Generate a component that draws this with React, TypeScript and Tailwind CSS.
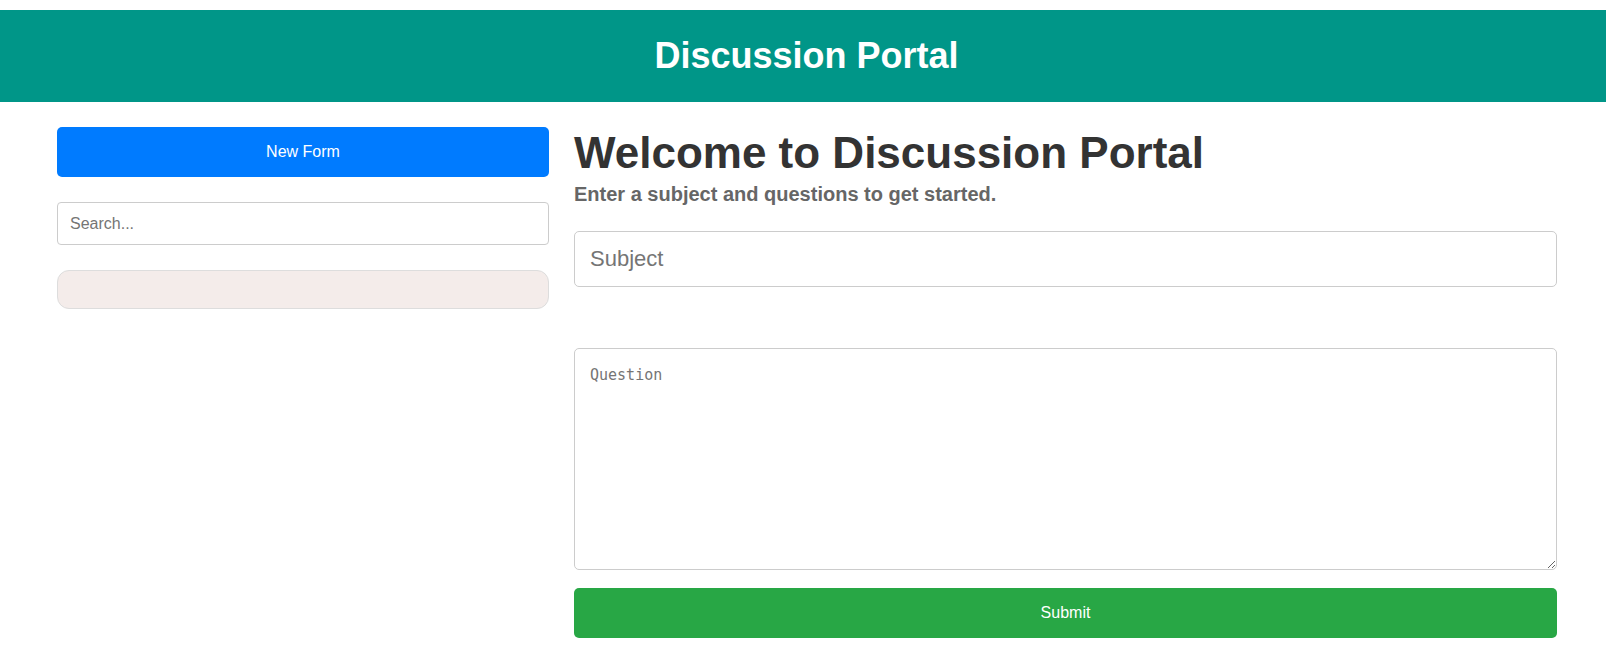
import React from "react";

export default function App() {
  return (
    <div className="min-h-screen bg-white pt-[10px] font-['Liberation_Sans',Arial,sans-serif]">
      <header className="bg-[#009688] h-[92px] flex items-center justify-center pl-[7px]">
        <h1 className="text-white text-[36px] font-bold leading-none">Discussion Portal</h1>
      </header>

      <main className="flex gap-[25px] pl-[57px] pt-[25px]">
        <aside className="w-[492px] flex flex-col gap-[25px]">
          <button className="h-[50px] w-full bg-[#007bff] text-white text-base rounded-[5px]">
            New Form
          </button>
          <input
            type="text"
            placeholder="Search..."
            className="h-[43px] w-full border border-[#ccc] rounded-[4px] px-3 text-base text-[#333] placeholder:text-[#757575] outline-none"
          />
          <div className="h-[39px] w-full bg-[#f4ecea] border border-[#ddd] rounded-[12px]" />
        </aside>

        <section className="w-[983px] flex flex-col">
          <h2 className="mt-[4px] text-[44px] font-bold leading-none text-[#333]">
            Welcome to Discussion Portal
          </h2>
          <p className="mt-[9px] text-[20px] font-bold leading-none text-[#666]">
            Enter a subject and questions to get started.
          </p>
          <input
            type="text"
            placeholder="Subject"
            className="mt-[27px] h-[56px] w-full border border-[#ccc] rounded-[5px] px-[15px] text-[22px] text-[#333] placeholder:text-[#757575] outline-none"
          />
          <textarea
            placeholder="Question"
            className="mt-[61px] h-[222px] w-full border border-[#ccc] rounded-[5px] px-[15px] pt-[17px] pb-[15px] text-[15px] leading-[1.2] font-['DejaVu_Sans_Mono',monospace] text-[#333] placeholder:text-[#757575] outline-none"
          />
          <button className="mt-[18px] h-[50px] w-full bg-[#28a745] text-white text-base rounded-[5px]">
            Submit
          </button>
        </section>
      </main>
    </div>
  );
}
